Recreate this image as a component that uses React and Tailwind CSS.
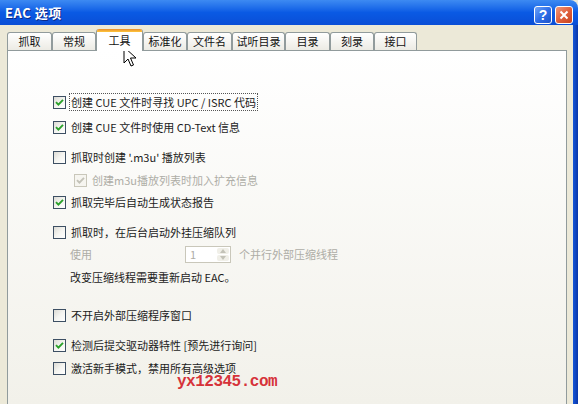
import React from "react";

const FONT = { fontFamily: '"Noto Sans CJK SC", "Noto Sans", sans-serif' };

function Check({ checked, disabled }) {
  return (
    <span
      className={`relative flex h-[13px] w-[13px] shrink-0 items-center justify-center border ${
        disabled
          ? "border-[#c9c7ba] bg-[#f6f5f0]"
          : "border-[#3d4f63] bg-gradient-to-br from-[#dcdbd5] via-[#f4f4f0] to-white"
      }`}
    >
      {checked && (
        <svg width="9" height="9" viewBox="0 0 9 9">
          <path
            d="M1 4.2 L3.4 6.6 L8 1.8"
            fill="none"
            stroke={disabled ? "#c3c2b8" : "#2aa12a"}
            strokeWidth="1.9"
          />
        </svg>
      )}
    </span>
  );
}

function Row({ checked, disabled, children, className = "", focus }) {
  return (
    <div className={`flex h-[22px] items-center gap-[4px] ${className}`}>
      <Check checked={checked} disabled={disabled} />
      <span
        className={`whitespace-nowrap px-[1px] ${
          disabled ? "text-[#aeada6]" : "text-[#1b1b1b]"
        } ${focus ? "outline-1 outline-dotted outline-[#555]" : ""}`}
      >
        {children}
      </span>
    </div>
  );
}

const tabs = [
  { label: "抓取", w: "w-[45px]" },
  { label: "常规", w: "w-[44px]" },
  { label: "工具", w: "w-[47px]", active: true },
  { label: "标准化", w: "w-[44px]" },
  { label: "文件名", w: "w-[45px]" },
  { label: "试听目录", w: "w-[53px]" },
  { label: "目录", w: "w-[45px]" },
  { label: "刻录", w: "w-[44px]" },
  { label: "接口", w: "w-[43px]" },
];

export default function App() {
  return (
    <div
      className="relative flex h-[404px] w-[578px] flex-col overflow-hidden bg-[#ece9d8] text-[11px]"
      style={FONT}
    >
      {/* caption bar */}
      <div className="flex h-[25px] shrink-0 items-center justify-between rounded-tr-[8px] bg-gradient-to-b from-[#3d8af2] via-[#0a5ae4] to-[#0a4ed6] pl-[5px] pr-[5px]">
        <span className="text-[13px] font-bold tracking-[0.5px] text-white [text-shadow:1px_1px_0_#0a2a88]">
          EAC 选项
        </span>
        <div className="mt-[4px] flex gap-[3px]">
          <div className="flex h-[18px] w-[18px] items-center justify-center rounded-[3px] border border-white bg-gradient-to-br from-[#6fa3f7] via-[#2f6ee8] to-[#1e52c8]">
            <span
              className="text-[14px] font-bold leading-none text-white"
              style={{ fontFamily: '"Liberation Sans", sans-serif' }}
            >
              ?
            </span>
          </div>
          <div className="flex h-[18px] w-[18px] items-center justify-center rounded-[3px] border border-white bg-gradient-to-br from-[#f0977a] via-[#e0603c] to-[#c7421e]">
            <svg width="10" height="10" viewBox="0 0 10 10">
              <path d="M1.5 1.5 L8.5 8.5 M8.5 1.5 L1.5 8.5" stroke="white" strokeWidth="2" />
            </svg>
          </div>
        </div>
      </div>

      <div className="flex min-h-0 flex-1">
        <div className="flex min-w-0 flex-1 flex-col pl-[7px] pr-[6px]">
          {/* tab strip */}
          <div className="flex h-[25px] shrink-0 items-end">
            {tabs.map((t) =>
              t.active ? (
                <div
                  key={t.label}
                  className={`${t.w} relative z-10 -mb-px flex h-[22px] flex-col rounded-t-[3px] border-x border-[#919b9c] bg-white`}
                >
                  <div className="h-[3px] rounded-t-[2px] bg-gradient-to-b from-[#e68b2c] to-[#ffc73c]" />
                  <div className="flex flex-1 items-center justify-center pb-[2px] text-[#111]">
                    {t.label}
                  </div>
                </div>
              ) : (
                <div
                  key={t.label}
                  className={`${t.w} flex h-[18px] items-center justify-center rounded-t-[3px] border border-b-0 border-[#919b9c] bg-gradient-to-b from-white to-[#ecebe4] text-[#111]`}
                >
                  {t.label}
                </div>
              )
            )}
          </div>

          {/* tab page */}
          <div className="flex min-h-0 flex-1 flex-col border border-b-0 border-[#919b9c] bg-gradient-to-b from-white to-[#f2f1ea] pl-[45px] pt-[40px]">
            <Row checked focus>
              创建 CUE 文件时寻找 UPC / ISRC 代码
            </Row>
            <Row checked className="mt-[3px]">
              创建 CUE 文件时使用 CD-Text 信息
            </Row>
            <Row className="mt-[8px]">抓取时创建 '.m3u' 播放列表</Row>
            <Row checked disabled className="ml-[21px] mt-[1px]">
              创建m3u播放列表时加入扩充信息
            </Row>
            <Row checked>抓取完毕后自动生成状态报告</Row>
            <Row className="mt-[8px]">抓取时，在后台启动外挂压缩队列</Row>

            <div className="flex h-[22px] items-center pl-[17px] text-[#aeada6]">
              <span className="w-[115px]">使用</span>
              <div className="flex h-[17px] w-[46px] items-stretch border border-[#c9c7ba] bg-white">
                <span className="flex-1 pl-[4px] leading-[15px]">1</span>
                <div className="flex w-[14px] flex-col gap-px p-px">
                  <div className="flex flex-1 items-center justify-center rounded-[2px] bg-[#f0efe8]">
                    <svg width="6" height="4" viewBox="0 0 6 4">
                      <path d="M0 4 L3 0 L6 4 Z" fill="#c3c2b8" />
                    </svg>
                  </div>
                  <div className="flex flex-1 items-center justify-center rounded-[2px] bg-[#f0efe8]">
                    <svg width="6" height="4" viewBox="0 0 6 4">
                      <path d="M0 0 L3 4 L6 0 Z" fill="#c3c2b8" />
                    </svg>
                  </div>
                </div>
              </div>
              <span className="ml-[8px]">个并行外部压缩线程</span>
            </div>

            <div className="mt-[1px] flex h-[22px] items-center pl-[17px] text-[#1b1b1b]">
              改变压缩线程需要重新启动 EAC。
            </div>

            <Row className="mt-[16px]">不开启外部压缩程序窗口</Row>
            <Row checked className="mt-[8px]">
              检测后提交驱动器特性 [预先进行询问]
            </Row>
            <Row className="mt-[1px]">激活新手模式，禁用所有高级选项</Row>
          </div>
        </div>
        {/* window frame, right side */}
        <div className="w-[5px] shrink-0 bg-gradient-to-r from-[#1656d8] to-[#0a36a8]" />
      </div>

      {/* site watermark */}
      <div
        className="absolute left-[177px] top-[370px] text-[16px] font-bold tracking-[-0.5px] text-[#d6333a]"
        style={{ fontFamily: '"Liberation Mono", monospace' }}
      >
        yx12345.com
      </div>

      {/* mouse pointer */}
      <svg
        className="absolute left-[123px] top-[46px]"
        width="14"
        height="22"
        viewBox="0 0 14 22"
      >
        <path
          d="M1 1 L1 17 L5 13 L8 20 L10.5 19 L7.5 12 L13 12 Z"
          fill="white"
          stroke="black"
          strokeWidth="1"
          strokeLinejoin="round"
        />
      </svg>
    </div>
  );
}
